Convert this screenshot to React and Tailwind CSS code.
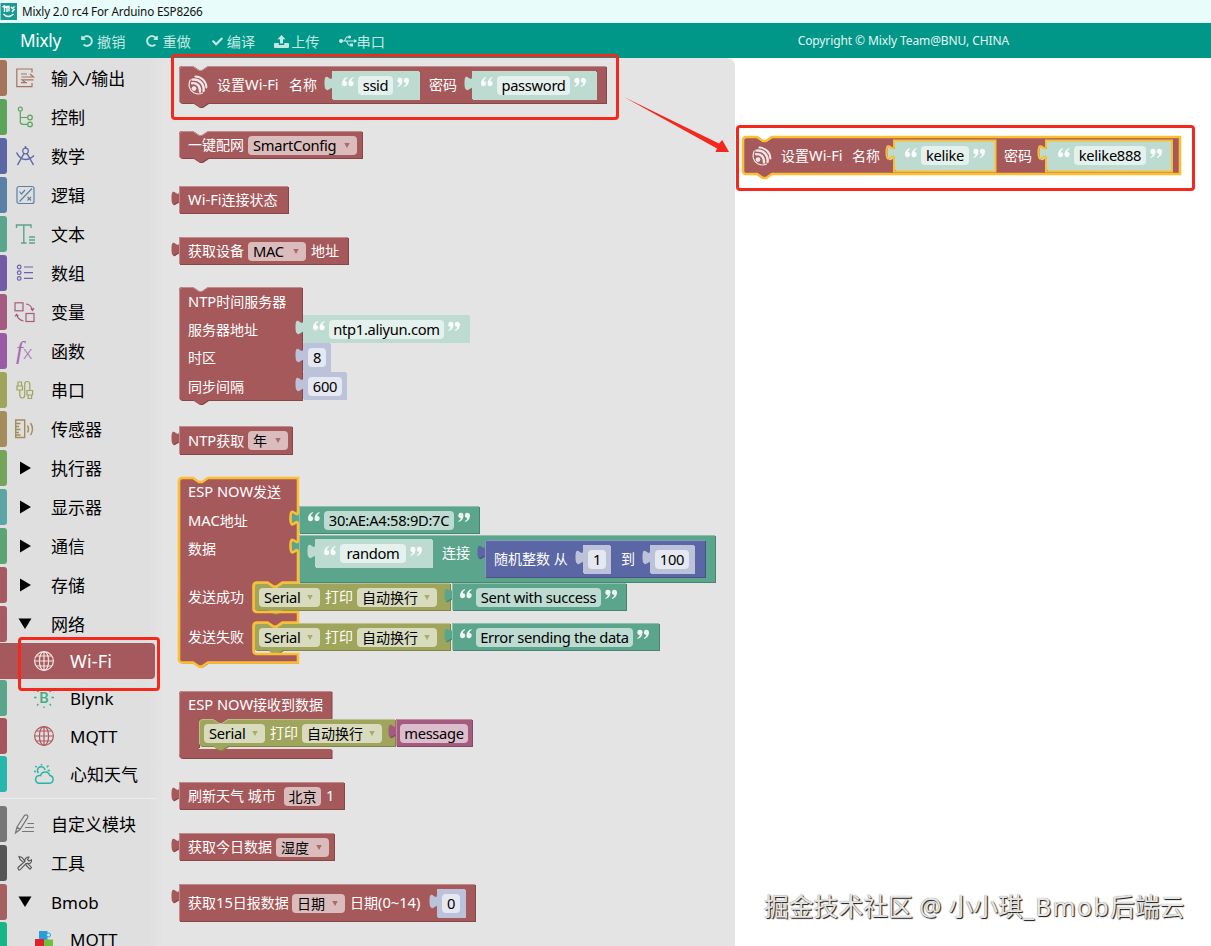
import { FaCheck, FaRedoAlt, FaUndoAlt, FaUsb } from 'react-icons/fa';

const COLORS = {
  red: { fill: '#a5595b', dark: '#84474a', light: '#c08b8d' },
  teal: { fill: '#5ba58c', dark: '#498470', light: '#8cc0ae' },
  blue: { fill: '#5b67a5', dark: '#495284', light: '#8c95c0' },
  olive: { fill: '#9fa55b', dark: '#7f8449', light: '#bcc08c' },
  plum: { fill: '#a55b80', dark: '#844966', light: '#c08ca6' },
  tealShadow: { fill: '#bddbd1', dark: '#bddbd1', light: '#bddbd1' },
  blueShadow: { fill: '#bdc2db', dark: '#bdc2db', light: '#bdc2db' },
};

const TAB_UP = 'c 0,-10 -7.5,8 -7.5,-7 s 7.5,2.5 7.5,-7';
const TAB_DOWN = 'c 0,10 -7.5,-8 -7.5,7 s 7.5,-2.5 7.5,7';

const statementPath = (w, h) =>
  `M0,3 a3,3 0 0,1 3,-3 H14 l6,4 h3 l6,-4 H${w} V${h} H29 l-6,4 h-3 l-6,-4 H3 a3,3 0 0,1 -3,-3 z`;

const outputPath = (w, h) => `M0,0 H${w} V${h} H0 V19 ${TAB_UP} z`;

// ESP NOW send block: two value inputs, two statement inputs
const SEND_PATH = `M0,3 a3,3 0 0,1 3,-3 H14 l6,4 h3 l6,-4 H119 V33 ${TAB_DOWN} V61 ${TAB_DOWN} V104.5 H103.5 l-6,4 h-3 l-6,-4 H77.5 a3,3 0 0,0 -3,3 V131 a3,3 0 0,0 3,3 H119 V144.5 H103.5 l-6,4 h-3 l-6,-4 H77.5 a3,3 0 0,0 -3,3 V173 a3,3 0 0,0 3,3 H119 V184.5 H29 l-6,4 h-3 l-6,-4 H3 a3,3 0 0,1 -3,-3 z`;

// ESP NOW receive block, a hat-less C shape
const RECEIVE_PATH =
  'M0,3 a3,3 0 0,1 3,-3 H152.5 V28 H49 l-6,4 h-3 l-6,-4 H20 V58 H152.5 V67 H3 a3,3 0 0,1 -3,-3 z';

function Block({ className = '', w, h, color = 'red', kind = 'statement', path, rowClass = 'items-center', children }) {
  const c = COLORS[color];
  // the last pixel on the right and the bottom belongs to the dark edge
  const d = path || (kind === 'output' ? outputPath(w - 1, h - 1) : statementPath(w - 1, h - 1));
  const edges = {
    output: `M0.5,${h - 1} V0.5 H${w - 1}`,
    hat: `M0.5,${h - 4} V3 L3,0.5 H${w - 1}`,
    statement: `M0.5,${h - 3} V3 L3,0.5 H14 l6,4 h3 l6,-4 H${w - 1}`,
  };
  return (
    <div className={`grid shrink-0 ${className}`}>
      <svg width={w} height={h} className="col-start-1 row-start-1 block overflow-visible">
        <path d={d} fill={c.dark} transform="translate(1,1)" />
        <path d={d} fill={c.fill} />
        <path d={edges[kind]} fill="none" stroke={c.light} strokeWidth="1" />
      </svg>
      <div className={`relative col-start-1 row-start-1 flex w-0 min-w-full ${rowClass}`}>{children}</div>
    </div>
  );
}

// Latin glyphs are set slightly larger than the Chinese ones
function Mixed({ children }) {
  return String(children)
    .split(/([\u4e00-\u9fff]+)/)
    .map((part, i) =>
      /[\u4e00-\u9fff]/.test(part) ? <span key={i} className="text-[14px] tracking-normal">{part}</span> : part
    );
}

function Label({ className = '', children }) {
  return (
    <span className={`h-5 shrink-0 whitespace-pre text-[14.7px] leading-[19px] text-white ${className}`}>
      <Mixed>{children}</Mixed>
    </span>
  );
}

function Field({ className = '', caret = '', children }) {
  return (
    <span className={`flex h-[19px] shrink-0 items-center rounded bg-white/60 whitespace-pre text-[14.7px] leading-[19px] tracking-[-0.3px] text-black ${caret ? 'justify-between pl-[5px] pr-[7px]' : 'justify-center'} ${className}`}>
      <span><Mixed>{children}</Mixed></span>
      {caret && (
        <svg width="6" height="5" className="block shrink-0">
          <path d="M0.3,0 H5.7 L3,5 z" fill={COLORS[caret].fill} fillOpacity="0.85" />
        </svg>
      )}
    </span>
  );
}

function Quote({ className = '', close = false }) {
  return (
    <svg width="12" height="10" viewBox="0 0 12 10" className={`block shrink-0 -translate-y-[3px] ${className}`}>
      <g fill="#fff" fillOpacity="0.9" transform={close ? 'rotate(180 6 5)' : undefined}>
        <path d="M4.8,0 C2,1 0,3.4 0,6.6 a2.6,2.6 0 1 0 2.8,-2.5 C2.9,2.6 3.8,1.6 5.2,0.9 z" />
        <path d="M11.3,0 C8.5,1 6.5,3.4 6.5,6.6 a2.6,2.6 0 1 0 2.8,-2.5 C9.4,2.6 10.3,1.6 11.7,0.9 z" />
      </g>
    </svg>
  );
}

function StringBlock({ w, h = 28, color = 'tealShadow', className = '', fieldClass, pad = 'pl-[10px]', children }) {
  return (
    <Block w={w} h={h} color={color} kind="output" className={className} rowClass={`items-center ${pad}`}>
      <Quote />
      <Field className={`ml-1 ${fieldClass}`}>{children}</Field>
      <Quote close className="ml-1" />
    </Block>
  );
}

function NumberBlock({ w, h = 28, className = '', fieldClass, children }) {
  return (
    <Block w={w} h={h} color="blueShadow" kind="output" className={className} rowClass="items-center pl-[5px]">
      <Field className={fieldClass}>{children}</Field>
    </Block>
  );
}

function EspLogo() {
  return (
    <svg width="20" height="20" viewBox="0 0 20 20" className="block shrink-0">
      <g fill="none" stroke="#f3e6e6" strokeLinecap="round">
        <path strokeWidth="2" d="M7.4,1.6 C13.5,1.8 18.2,6.4 18.4,12.4" />
        <path strokeWidth="2.4" d="M4.4,4.6 C11.2,3.8 16.4,8.8 15.6,15.8" />
        <path strokeWidth="2.4" d="M4,8.2 C9,7.6 12.4,11 12,16.6" />
        <path strokeWidth="1.2" d="M2.2,5 C-0.2,10 1.4,15.4 5.8,17.8 C9,19.4 12.6,19 14.6,18" />
      </g>
      <circle cx="6" cy="13.6" r="2.4" fill="#f3e6e6" />
    </svg>
  );
}

function PrintBlock({ className }) {
  return (
    <Block w={197} h={28} color="olive" className={className} rowClass="items-center pl-[5px]">
      <Field caret="olive" className="w-[61px]">Serial</Field>
      <Label className="ml-[5px] w-7">打印</Label>
      <Field caret="olive" className="ml-1 w-20">自动换行</Field>
    </Block>
  );
}

function Flyout() {
  return (
    <>
      <Block w={428} h={38} className="absolute left-[179px] top-[66px]" rowClass="items-center pl-[9px]">
        <EspLogo />
        <Label className="ml-[9px] w-[62px]">设置Wi-Fi</Label>
        <Label className="ml-[10px] w-7">名称</Label>
        <StringBlock w={88} h={29} className="ml-[15px]" fieldClass="w-[35px]">ssid</StringBlock>
        <Label className="ml-[9px] w-7">密码</Label>
        <StringBlock w={125} h={29} className="ml-[15px]" pad="pl-[9px]" fieldClass="w-[73px]">password</StringBlock>
      </Block>

      <Block w={184} h={28} className="absolute left-[179px] top-[131px]" rowClass="items-center pl-[9px]">
        <Label className="w-14">一键配网</Label>
        <Field caret="red" className="ml-1 w-[109px]">SmartConfig</Field>
      </Block>

      <Block w={110} h={28} kind="output" className="absolute left-[179px] top-[186px]" rowClass="items-center pl-[9px]">
        <Label>Wi-Fi连接状态</Label>
      </Block>

      <Block w={170} h={28} kind="output" className="absolute left-[179px] top-[237px]" rowClass="items-center pl-[9px]">
        <Label className="w-14">获取设备</Label>
        <Field caret="red" className="ml-1 w-[58px]">MAC</Field>
        <Label className="ml-[5px]">地址</Label>
      </Block>

      <Block w={124} h={114} className="absolute left-[179px] top-[287px]" rowClass="flex-col pl-[9px] pt-[5px] gap-[8.2px]">
        <Label>NTP时间服务器</Label>
        <Label>服务器地址</Label>
        <Label>时区</Label>
        <Label>同步间隔</Label>
      </Block>
      <StringBlock w={167} className="absolute left-[303px] top-[315px]" fieldClass="w-[115px]">ntp1.aliyun.com</StringBlock>
      <NumberBlock w={28} h={29} className="absolute left-[303px] top-[343px]" fieldClass="w-[18px]">8</NumberBlock>
      <NumberBlock w={44} className="absolute left-[303px] top-[372px]" fieldClass="w-[34px]">600</NumberBlock>

      <Block w={114} h={29} kind="output" className="absolute left-[179px] top-[426px]" rowClass="items-center pl-[9px]">
        <Label className="w-14">NTP获取</Label>
        <Field caret="red" className="ml-1 w-[40px]">年</Field>
      </Block>

      <SendBlock />

      <Block w={153.5} h={68} kind="hat" path={RECEIVE_PATH} className="absolute left-[179px] top-[691px]" rowClass="items-start pl-[9px] pt-1">
        <Label>ESP NOW接收到数据</Label>
      </Block>
      <div className="absolute left-[199px] top-[748px] h-px w-[134px] bg-[#eed9d9]" />
      <PrintBlock className="absolute left-[199px] top-[719px]" />
      <Block w={77} h={28} color="plum" kind="output" className="absolute left-[396px] top-[719px]" rowClass="items-center pl-1">
        <Field className="w-[68px]">message</Field>
      </Block>

      <Block w={166} h={28} kind="output" className="absolute left-[179px] top-[782px]" rowClass="items-center pl-[9px]">
        <Label className="w-[88px]">刷新天气 城市</Label>
        <Field className="ml-2 w-[37px]">北京</Field>
        <Label className="ml-[5px]">1</Label>
      </Block>

      <Block w={156} h={28} kind="output" className="absolute left-[179px] top-[833px]" rowClass="items-center pl-[9px]">
        <Label className="w-[84px]">获取今日数据</Label>
        <Field caret="red" className="ml-1 w-[53px]">湿度</Field>
      </Block>

      <Block w={297} h={38} kind="output" className="absolute left-[179px] top-[884px]" rowClass="items-center pl-[9px]">
        <Label className="w-[100px]">获取15日报数据</Label>
        <Field caret="red" className="ml-1 w-[53px]">日期</Field>
        <Label className="ml-[5px] w-[72px]">日期(0~14)</Label>
        <NumberBlock w={29} h={29} className="ml-[15px]" fieldClass="w-[18px]">0</NumberBlock>
      </Block>
    </>
  );
}

function SendBlock() {
  return (
    <>
      <Block w={119} h={184.5} path={SEND_PATH} className="absolute left-[179px] top-[478px]" rowClass="flex-col pl-[9px] pt-1">
        <Label>ESP NOW发送</Label>
        <Label className="mt-[9px]">MAC地址</Label>
        <Label className="mt-2">数据</Label>
        <Label className="mt-7">发送成功</Label>
        <Label className="mt-5">发送失败</Label>
      </Block>

      <StringBlock w={181} color="teal" pad="pl-[9px]" className="absolute left-[299px] top-[506px]" fieldClass="w-[130px]">30:AE:A4:58:9D:7C</StringBlock>
      <Block w={417} h={48} color="teal" kind="output" className="absolute left-[299px] top-[535px]" rowClass="items-start pl-4">
        <StringBlock w={118} h={29} pad="pl-[9px]" className="mt-1" fieldClass="w-[66px]">random</StringBlock>
        <Label className="ml-[9px] mt-2 w-7">连接</Label>
        <Block w={221} h={38} color="blue" kind="output" className="ml-[15px] mt-[5px]" rowClass="items-center pl-[9px]">
          <Label className="w-[74px]">随机整数 从</Label>
          <NumberBlock w={28} h={29} className="ml-[15px]" fieldClass="w-[18px]">1</NumberBlock>
          <Label className="ml-[10px] w-[14px]">到</Label>
          <NumberBlock w={45} h={29} className="ml-[15px]" fieldClass="w-[34px]">100</NumberBlock>
        </Block>
      </Block>

      <PrintBlock className="absolute left-[254px] top-[583px]" />
      <StringBlock w={175} color="teal" pad="pl-2" className="absolute left-[452px] top-[583px]" fieldClass="w-[125px]">Sent with success</StringBlock>
      <PrintBlock className="absolute left-[254px] top-[623px]" />
      <StringBlock w={208} color="teal" pad="pl-2" className="absolute left-[452px] top-[623px]" fieldClass="w-[157px]">Error sending the data</StringBlock>

      {/* selection outline stays above the connected blocks */}
      <svg width="119" height="185" className="absolute left-[179px] top-[478px] overflow-visible">
        <path d={SEND_PATH} fill="none" stroke="#fcbf33" strokeWidth="2.6" />
      </svg>
    </>
  );
}

function WorkspaceBlock() {
  return (
    <>
      <Block w={437} h={37} className="absolute left-[743px] top-[137px]" rowClass="items-center pl-[9px]">
        <EspLogo />
        <Label className="ml-[9px] w-[62px]">设置Wi-Fi</Label>
        <Label className="ml-[9px] w-7">名称</Label>
        <StringBlock w={101} h={30} className="ml-[15px]" pad="pl-[10px]" fieldClass="w-12">kelike</StringBlock>
        <Label className="ml-[8px] w-7">密码</Label>
        <StringBlock w={126} h={30} className="ml-[15px]" pad="pl-[11px]" fieldClass="w-[72px]">kelike888</StringBlock>
      </Block>
      <svg width="437" height="37" className="absolute left-[743px] top-[137px] overflow-visible">
        <g fill="none" stroke="#fcbf33">
          <path d={statementPath(437, 37)} strokeWidth="2.6" />
          <path d={outputPath(101.5, 31)} strokeWidth="2" transform="translate(151,3.5)" />
          <path d={outputPath(126, 31)} strokeWidth="2" transform="translate(303,3.5)" />
        </g>
      </svg>
    </>
  );
}

function Glyph({ color, children, className = '' }) {
  return (
    <svg width="20" height="20" viewBox="0 0 20 20" fill="none" stroke={color} strokeWidth="1.2" className={`block overflow-visible ${className}`}>
      {children}
    </svg>
  );
}

const Globe = ({ color }) => (
  <Glyph color={color}>
    <circle cx="10" cy="10" r="9.4" />
    <ellipse cx="10" cy="10" rx="4.6" ry="9.4" />
    <path d="M10,0.6 V19.4 M0.6,10 H19.4 M2.4,5 H17.6 M2.4,15 H17.6" />
  </Glyph>
);

const Arrow = ({ open }) => (
  <svg width="14" height="14" viewBox="0 0 14 14" className="ml-[2px] block">
    <path d={open ? 'M0.5,1.5 H13.5 L7,12 z' : 'M2,0.5 L13,7 L2,13.5 z'} fill="#000" />
  </svg>
);

const categories = [
  {
    name: '输入/输出', bar: 'bg-[#a5745b]',
    icon: <Glyph color="#a5745b"><path d="M16,4.5 V1 H0.8 V18.6 H16 V15 M5,6 H11 M5,14.6 H11 M5.5,9 H17.5 L14,6 M17.5,11.8 H6 L9.5,14.6" /></Glyph>,
  },
  {
    name: '控制', bar: 'bg-[#5ba55b]',
    icon: <Glyph color="#5ba55b"><circle cx="4.3" cy="2.2" r="2" /><circle cx="14" cy="10.5" r="2.3" /><circle cx="14" cy="17.4" r="2.3" /><path d="M4.3,4.4 V15 Q4.3,17.4 7,17.4 H11.6 M4.3,10.5 H11.6" /></Glyph>,
  },
  {
    name: '数学', bar: 'bg-[#5b67a5]',
    icon: <Glyph color="#5b67a5"><circle cx="9.5" cy="5" r="2.8" /><path strokeWidth="1.5" d="M9.5,0 V2.2 M8,7.5 L1.5,19 M11,7.5 L17.5,19 M0.5,6.5 Q4,13.5 9.5,13.5 Q14,13.5 18,9.5" /></Glyph>,
  },
  {
    name: '逻辑', bar: 'bg-[#5b80a5]',
    icon: <Glyph color="#5b80a5"><rect x="1" y="1.5" width="17" height="17" rx="2" /><path d="M16,3.5 L3.5,16.5 M3.5,6.5 L5.5,9 L9,5 M11.5,12 L15,15.5 M15,12 L11.5,15.5" /></Glyph>,
  },
  {
    name: '文本', bar: 'bg-[#5ba58c]',
    icon: <Glyph color="#5ba58c"><path strokeWidth="1.4" d="M0.5,4 V1 H15 V4 M7.8,1 V19 M5,19 H10.5 M13,13 H19 M13,16 H19 M13,19 H19" /></Glyph>,
  },
  {
    name: '数组', bar: 'bg-[#745ba5]',
    icon: <Glyph color="#6a5fb5"><circle cx="3.2" cy="4" r="1.8" /><circle cx="3.2" cy="9.7" r="1.8" /><circle cx="3.2" cy="15.4" r="1.8" /><path d="M8,4 H17 M8,9.7 H17 M8,15.4 H17" /></Glyph>,
  },
  {
    name: '变量', bar: 'bg-[#a55b80]',
    icon: <Glyph color="#a55b80" className="-ml-px"><rect x="0" y="0.8" width="8" height="8" /><rect x="11" y="11.5" width="8" height="8" /><path d="M11,2 Q16,2.5 17.5,8 M15.8,6.5 L17.6,8.5 L19,6 M8.5,19 Q3,18 1.5,12.5 M0,14.5 L1.5,12.3 L3.4,14" /></Glyph>,
  },
  {
    name: '函数', bar: 'bg-[#995ba5]',
    icon: <span className="flex w-5 items-baseline font-['Liberation_Serif',serif] italic text-[#a56bb0]"><span className="text-[25px] leading-5">f</span><span className="font-['Open_Sans',sans-serif] text-[19px] font-light not-italic leading-5">x</span></span>,
  },
  {
    name: '串口', bar: 'bg-[#9fa55b]',
    icon: <Glyph color="#9fa55b"><path d="M2,6 V2 H5.5 V6 M1,6 H6.5 V10 H1 z M3.8,10 V15 Q3.8,18 6.2,18 Q8.7,18 8.7,15 V4.5 Q8.7,1.5 11.2,1.5 Q13.8,1.5 13.8,4.5 V10 M11,10.5 H16.6 V15 H11 z M12.2,15 V18.5 H15.6 V15" /></Glyph>,
  },
  {
    name: '传感器', bar: 'bg-[#a58c5b]',
    icon: <Glyph color="#a58c5b" className="-ml-px"><path strokeWidth="1.4" d="M0.7,1 H9.7 V18.5 H0.7 z M1,4.5 H5.5 M1,7.5 H4 M1,10.5 H5.5 M1,13.5 H4 M1,16 H5.5 M12.5,6.5 Q14.5,10 12.5,13.5 M15.5,4 Q19.5,10 15.5,16" /></Glyph>,
  },
  { name: '执行器', bar: 'bg-[#74a55b]', icon: <Arrow /> },
  { name: '显示器', bar: 'bg-[#5ba5a5]', icon: <Arrow /> },
  { name: '通信', bar: 'bg-[#5ba574]', icon: <Arrow /> },
  { name: '存储', bar: 'bg-[#a55b61]', icon: <Arrow /> },
  { name: '网络', bar: 'bg-[#a55b61]', icon: <Arrow open /> },
];

const networkItems = [
  {
    name: 'Blynk', bar: 'bg-[#5ba58c]',
    icon: (
      <svg width="20" height="20" viewBox="0 0 20 20" className="block overflow-visible">
        <text x="5.2" y="15.2" fontSize="15" fontWeight="500" fontFamily="Roboto, sans-serif" fill="#3fae82">B</text>
        <path d="M10,0 V1.6 M10,18.4 V20 M0,9.5 H2.6 M17.4,9.5 H20 M3,2.5 L4.4,3.9 M17,2.5 L15.6,3.9 M3,17.5 L4.4,16.1 M17,17.5 L15.6,16.1" stroke="#3fae82" strokeWidth="1.4" />
      </svg>
    ),
  },
  { name: 'MQTT', bar: 'bg-[#a5555c]', icon: <Globe color="#b0585f" /> },
  {
    name: '心知天气', bar: 'bg-[#27b6ac]',
    icon: (
      <Glyph color="#27b6a4">
        <path strokeWidth="1.5" d="M4.5,19.3 H15.5 A4,4 0 0 0 15.8,11.4 A4.8,4.8 0 0 0 6.6,11.6 A3.9,3.9 0 0 0 4.5,19.3 z M4.4,9 A3.8,3.8 0 1 1 11,6 M7.5,0 V1.5 M1.3,2 L2.6,3.3 M14.5,1.5 L12.8,3.2 M0,7.5 H2 M13.5,6.5 H16" />
      </Glyph>
    ),
  },
];

const extraItems = [
  {
    name: '自定义模块', bar: 'bg-[#777777]',
    icon: <Glyph color="#777" className="-ml-px"><path d="M2,13 L9.5,1.5 Q11,0.2 12.3,1.2 Q13.4,2.2 12.6,3.6 L5,15.5 L0.5,19 z M2,13 L5,15.5 M12.5,9.5 H19 M10,13.5 H19 M7,17.5 H19" /></Glyph>,
  },
  {
    name: '工具', bar: 'bg-[#555555]',
    icon: (
      <Glyph color="#555" className="-ml-px">
        <path strokeWidth="1.1" d="M4,3.5 L7,4.5 L10,8.5 L8.6,9.6 L5,6.5 z M11,11 L12.5,10.2 L16.5,14.5 L15,16.2 L10.8,12 M3,14.5 L9.8,8.5 Q9.5,5 13,4 L14,4.2 L12.5,6.5 L14,8 L16.5,6.8 Q17,10.5 13,10.8 L11,10.6 L5,16.8 Q3,17.5 3,14.5 z" />
      </Glyph>
    ),
  },
  { name: 'Bmob', bar: 'bg-[#a5615f]', icon: <Arrow open /> },
];

function TopItem({ name, bar, icon, className = 'mt-[3px]' }) {
  return (
    <div className={`flex h-9 shrink-0 items-center ${className}`}>
      <div className={`h-9 w-[7px] shrink-0 rounded-r-[3px] ${bar}`} />
      <div className="ml-[9px] flex w-[35px] shrink-0 items-center">{icon}</div>
      <span className="whitespace-nowrap pt-[2px] text-[17px] leading-9 text-black">{name}</span>
    </div>
  );
}

function SubItem({ name, bar, icon, active }) {
  return (
    <div className={`flex h-9 shrink-0 items-center ${active ? 'mt-[0.7px] w-[155px] rounded bg-[#a5595c] text-white' : 'mt-[1.8px] text-black'}`}>
      <div className={`h-9 w-[7px] shrink-0 rounded-r-[3px] ${bar}`} />
      <div className="ml-[27px] w-9 shrink-0">{icon}</div>
      <span className={`whitespace-nowrap leading-9 ${active ? 'text-[18px] tracking-[0.2px]' : 'pt-px text-[17px]'}`}>{name}</span>
    </div>
  );
}

function Sidebar() {
  return (
    <aside className="flex w-[165px] shrink-0 flex-col overflow-hidden bg-linear-to-r from-[#dfdfdf] from-90% to-[#e4e4e4] pt-[2px]">
      {categories.map((item, i) => (
        <TopItem key={item.name} {...item} className={i === 0 ? '' : 'mt-[3px]'} />
      ))}
      <SubItem name="Wi-Fi" bar="bg-[#a5595c]" icon={<Globe color="#f3e4e4" />} active />
      {networkItems.map((item) => (
        <SubItem key={item.name} {...item} />
      ))}
      <div className="mt-[6px] h-px w-[157px] shrink-0 bg-[#ececec]" />
      <TopItem {...extraItems[0]} className="mt-[7px]" />
      {extraItems.slice(1).map((item) => (
        <TopItem key={item.name} {...item} />
      ))}
      <SubItem
        name="MQTT"
        bar="bg-[#16b686]"
        icon={
          <svg width="20" height="20" viewBox="0 0 20 20" className="block overflow-visible">
            <rect x="5" y="1" width="8.5" height="9" fill="#2b9be0" />
            <circle cx="14.5" cy="5" r="2" fill="#cfe8f8" stroke="#2b9be0" />
            <rect x="1" y="9" width="9" height="9" fill="#e0202c" />
            <rect x="10" y="9.5" width="9" height="9" fill="#6fc03b" />
          </svg>
        }
      />
    </aside>
  );
}

const UploadIcon = () => (
  <svg width="15" height="13" viewBox="0 0 15 13" fill="currentColor" className="block">
    <path d="M7.5,0 L11.5,4.2 H9 V8.6 H6 V4.2 H3.5 z" />
    <path d="M1,8 H4.8 V10 H10.2 V8 H14 Q15,8 15,9 V12 Q15,13 14,13 H1 Q0,13 0,12 V9 Q0,8 1,8 z" />
  </svg>
);

const menu = [
  { icon: <FaUndoAlt className="text-[12px]" />, text: '撤销', className: 'ml-5', gap: 'gap-1' },
  { icon: <FaRedoAlt className="text-[12px]" />, text: '重做', className: 'ml-[21px]', gap: 'gap-1' },
  { icon: <FaCheck className="text-[11px]" />, text: '编译', className: 'ml-[21px]', gap: 'gap-1' },
  { icon: <UploadIcon />, text: '上传', className: 'ml-[19px]', gap: 'gap-[2px]' },
  { icon: <FaUsb className="text-[18px]" />, text: '串口', className: 'ml-[19px]', gap: 'gap-0' },
];

function Header() {
  return (
    <>
      <div className="flex h-[23px] shrink-0 items-center bg-[#e8fcfa]">
        <svg width="17" height="17" viewBox="0 0 17 17" className="block">
          <rect x="0.5" width="16.5" height="17" fill="#1a9a90" />
          <path d="M2.5,4 L4.5,3 V9 M4.5,4.5 L7,3.5 V9 M7,4 L9,3.5 V8.5 M11,4 L12.5,5.5 L14.5,3.5 M12,9 L14.5,6 M3.5,11 Q8,16 13.5,11" fill="none" stroke="#fff" strokeWidth="1.4" />
        </svg>
        <span className="ml-[5px] whitespace-nowrap pt-px text-[11.7px] tracking-[-0.16px] text-[#111]">Mixly 2.0 rc4 For Arduino ESP8266</span>
      </div>
      <div className="flex h-[35px] shrink-0 items-center bg-[#009688] text-[#c3e8e3]">
        <span className="ml-5 w-[41px] whitespace-nowrap text-[17.3px] tracking-[-0.3px] text-white">Mixly</span>
        {menu.map((m) => (
          <div key={m.text} className={`flex items-center pt-[2px] text-[14.2px] ${m.gap} ${m.className}`}>
            {m.icon}
            <span className="whitespace-nowrap">{m.text}</span>
          </div>
        ))}
        <span className="ml-auto mr-[202px] whitespace-nowrap pt-px text-[12px] tracking-[-0.1px] text-[#e6f6f4]">Copyright © Mixly Team@BNU, CHINA</span>
      </div>
    </>
  );
}

export default function App() {
  return (
    <div className="relative flex h-[946px] w-[1211px] flex-col overflow-hidden bg-white font-['Noto_Sans','Noto_Sans_CJK_SC',sans-serif]">
      <Header />
      <div className="flex min-h-0 flex-1">
        <Sidebar />
        <div className="w-[570px] shrink-0 rounded-tr-lg bg-[#e4e4e4]" />
        <div className="flex-1 bg-white" />
      </div>

      {/* Block canvas */}
      <div className="absolute inset-0">
        <Flyout />
        <WorkspaceBlock />
      </div>

      {/* Annotations */}
      <div className="absolute left-[171px] top-[54px] h-[66px] w-[448px] rounded-[4px] border-3 border-[#f4281d]" />
      <div className="absolute left-[736px] top-[125px] h-[66px] w-[459px] rounded-[4px] border-3 border-[#f4281d]" />
      <div className="absolute left-[18px] top-[637px] h-[54px] w-[142px] rounded-[4px] border-3 border-[#f4281d]" />
      <svg width="106" height="56" className="absolute left-[624px] top-[97px]">
        <path d="M0,0 L95,46.5 L98.3,43 L105,55 L91.5,55 L93,51.5 z" fill="#f4281d" />
      </svg>

      <div className="absolute left-[764px] top-[888px] whitespace-nowrap text-[24.8px] leading-9 text-[#e6e6e6] [text-shadow:1px_1px_1px_#111,0_0_1px_#777]">
        掘金技术社区 <span className="tracking-[0.5px]">@</span> 小小琪<span className="tracking-[1.3px]">_Bmob</span>后端云
      </div>
    </div>
  );
}
